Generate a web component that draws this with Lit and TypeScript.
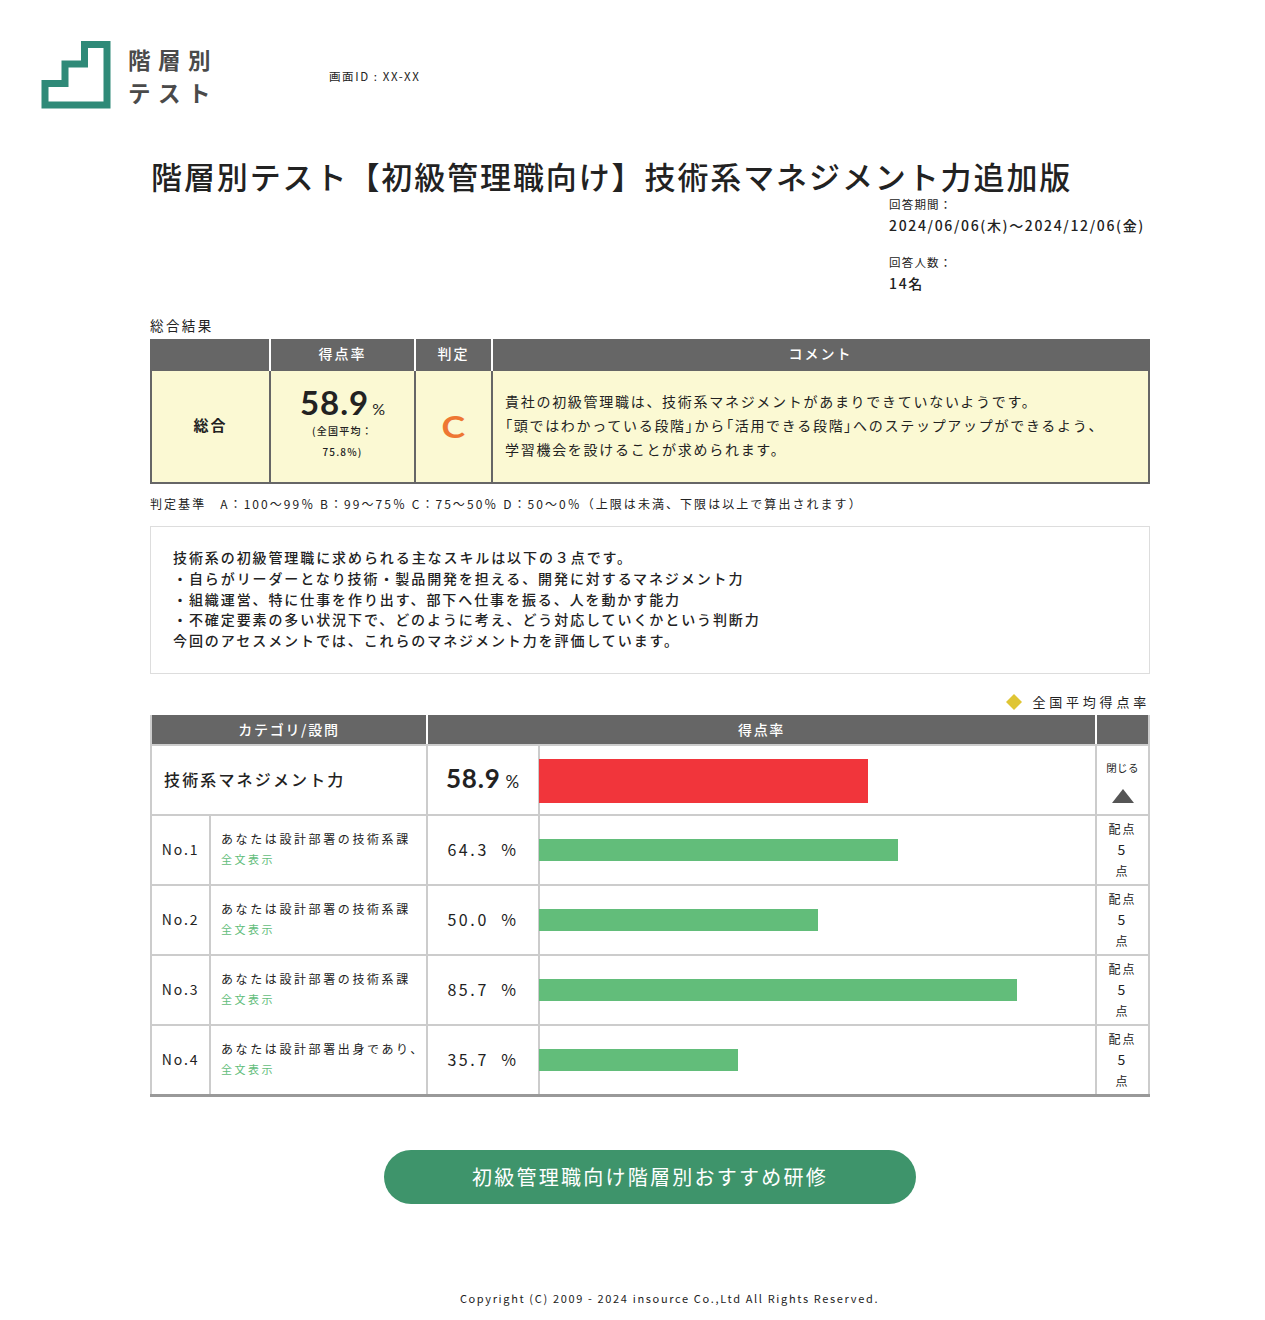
import { LitElement, html, css } from "lit";
import { customElement } from "lit/decorators.js";

const rows = [
  { no: "No.1", q: "あなたは設計部署の技術系課", rate: 64.3 },
  { no: "No.2", q: "あなたは設計部署の技術系課", rate: 50.0 },
  { no: "No.3", q: "あなたは設計部署の技術系課", rate: 85.7 },
  { no: "No.4", q: "あなたは設計部署出身であり、", rate: 35.7 },
];

@customElement("app-root")
export class AppRoot extends LitElement {
  static styles = css`
    :host {
      display: block;
      width: 1265px;
      height: 1320px;
      background: #fff;
      color: #222;
      font-family: "Noto Sans CJK JP", "Noto Sans", sans-serif;
      overflow: hidden;
    }
    * { box-sizing: border-box; }
    .top { display: flex; padding: 41px 0 0 41px; height: 157px; }
    .logo { width: 70px; height: 68px; display: block; flex: none; }
    .brand { margin-left: 17px; width: 201px; height: 70px; font-size: 22.5px; font-weight: 700; letter-spacing: 7.5px; color: #4a4a4a; display: flex; flex-direction: column; gap: 0; margin-top: 2px; }
    .brand div { height: 33px; line-height: 33px; }
    .sid { font-size: 11.5px; line-height: 16px; margin-top: 27px; letter-spacing: 1.6px; color: #222; }
    .main { margin-left: 150px; width: 1000px; }
    h1 { margin: 0 0 0 1px; font-size: 31px; line-height: 38px; font-weight: 500; letter-spacing: 1.9px; white-space: nowrap; color: #222; }
    .meta { margin: -1px 0 0 739px; height: 123px; }
    .meta .k { font-size: 11.5px; line-height: 16px; letter-spacing: 1.2px; height: 21px; padding-top: 2px; }
    .meta .v { font-size: 14px; line-height: 20px; letter-spacing: 1.65px; height: 37px; white-space: nowrap; font-weight: 500; }
    .cap { font-size: 13.5px; line-height: 20px; letter-spacing: 2.4px; height: 24px; margin-top: -2px; }
    .sum { display: grid; grid-template-columns: 117px 143px 75px 655px; column-gap: 2px; background: #666; padding: 0 2px 2px; }
    .sum .h { height: 32px; background: #666; color: #fff; font-size: 14px; font-weight: 500; letter-spacing: 2px; display: flex; align-items: center; justify-content: center; box-shadow: 2px 0 0 #fff; padding-bottom: 4px; }
    .sum .h.last { box-shadow: 2px 0 0 #666; }
    .sum .b { height: 111px; background: #fbf9d3; display: flex; align-items: center; justify-content: center; }
    .sum .total { font-size: 15px; font-weight: 700; letter-spacing: 2px; padding-bottom: 4px; }
    .sum .scorebox { flex-direction: column; justify-content: flex-start; text-align: center; padding-top: 12px; }
    .big { font-family: "Lato", sans-serif; font-size: 33px; line-height: 38px; height: 38px; font-weight: 700; letter-spacing: 1px; }
    .big small { font-size: 16px; font-weight: 400; letter-spacing: 0; margin-left: 3px; }
    .avg { font-size: 10px; line-height: 21px; font-weight: 500; letter-spacing: 1.2px; width: 90px; margin-top: -1px; }
    .sum .gradebox { padding-bottom: 2px; }
    .grade { font-size: 31px; line-height: 36px; font-weight: 700; color: #ee7733; font-family: "Lato", sans-serif; transform: scaleX(1.15); }
    .sum .comment { display: block; padding: 18px 0 0 12px; font-size: 14px; line-height: 24px; letter-spacing: 1.71px; }
    .br { font-feature-settings: "palt"; }
    .crit { font-size: 12px; line-height: 18px; letter-spacing: 2.05px; margin-top: 11px; white-space: nowrap; }
    .note { margin-top: 13px; height: 148px; border: 1px solid #ddd; padding: 20px 22px; font-size: 14px; line-height: 20.8px; letter-spacing: 1.91px; font-weight: 500; white-space: pre-line; }
    .legend { display: flex; justify-content: flex-end; align-items: center; height: 41px; padding-top: 14px; font-size: 13px; letter-spacing: 3.8px; }
    .legend svg { width: 18px; height: 18px; margin-right: 9px; }
    .tbl { display: grid; grid-template-columns: 57px 215px 110px 555px 51px; gap: 2px; background: #ccc; padding: 0 2px; border-bottom: 3px solid #999; }
    .tbl > div { background: #fff; display: flex; align-items: center; justify-content: center; }
    .tbl .th { background: #666; height: 29px; color: #fff; font-size: 14px; font-weight: 500; letter-spacing: 1.7px; box-shadow: 2px 0 0 #fff; padding-bottom: 2px; }
    .tbl .th.last { box-shadow: none; }
    .s2 { grid-column: span 2; }
    .tbl .cat { height: 68px; justify-content: flex-start; padding: 0 0 3px 12px; font-size: 16px; font-weight: 500; letter-spacing: 2.15px; }
    .tbl .rbig { font-family: "Lato", sans-serif; font-size: 26px; font-weight: 700; letter-spacing: .8px; padding: 0 0 4px 0; }
    .rbig small { font-size: 17px; font-weight: 400; margin-left: 5px; }
    .tbl .barcell { justify-content: flex-start; padding-top: 2px; }
    .track { display: block; width: 558px; margin-left: -1px; flex: none; }
    .bar { display: block; }
    .red { height: 44px; background: #f1353b; }
    .green { height: 22px; background: #62bd7a; margin-top: -2px; }
    .tbl .close { flex-direction: column; font-size: 10.5px; line-height: 14px; padding-top: 4px; letter-spacing: .3px; }
    .close svg { width: 24px; height: 16px; margin-top: 13px; display: block; }
    .tbl .no { height: 68px; font-size: 14px; letter-spacing: 1.9px; padding-bottom: 2px; }
    .tbl .q { flex-direction: column; align-items: flex-start; justify-content: center; padding: 0 0 2px 10px; font-size: 12px; letter-spacing: 2.6px; line-height: 21px; white-space: nowrap; overflow: hidden; }
    .q a { color: #62bd7a; font-size: 11px; letter-spacing: 2.5px; text-decoration: none; }
    .pct { font-size: 16px; letter-spacing: 2.6px; white-space: pre; padding-bottom: 2px; }
    .tbl .pts { flex-direction: column; font-size: 12px; line-height: 21px; letter-spacing: 2px; padding-bottom: 2px; }
    .pts b { font-weight: 400; font-size: 14px; }
    .btn { display: flex; align-items: center; justify-content: center; width: 532px; height: 54px; margin: 53px 0 0 234px; padding-bottom: 2px; border-radius: 27px; background: #3e946b; color: #fff; font-size: 20px; letter-spacing: 2.25px; text-decoration: none; }
    .foot { margin-top: 84px; margin-left: 39px; text-align: center; font-size: 11px; line-height: 20px; letter-spacing: 1.65px; white-space: nowrap; }
  `;

  render() {
    return html`
      <div class="top">
        <svg class="logo" viewBox="41 41 70 68" aria-hidden="true">
          <path d="M45 83.5H65V64H84.5V44.5H107V105H45Z" fill="none" stroke="#2f8a78" stroke-width="7" stroke-linejoin="miter" />
        </svg>
        <div class="brand"><div>階層別</div><div>テスト</div></div>
        <div class="sid">画面ID : XX-XX</div>
      </div>
      <div class="main">
        <h1>階層別テスト【初級管理職向け】技術系マネジメント力追加版</h1>
        <div class="meta">
          <div class="k">回答期間：</div>
          <div class="v">2024/06/06(木)～2024/12/06(金)</div>
          <div class="k">回答人数：</div>
          <div class="v">14名</div>
        </div>
        <div class="cap">総合結果</div>
        <div class="sum">
          <div class="h"></div>
          <div class="h">得点率</div>
          <div class="h">判定</div>
          <div class="h last">コメント</div>
          <div class="b total">総合</div>
          <div class="b scorebox">
            <div class="big">58.9<small>%</small></div>
            <div class="avg">(全国平均：75.8%)</div>
          </div>
          <div class="b gradebox"><span class="grade">C</span></div>
          <div class="b comment">貴社の初級管理職は、技術系マネジメントがあまりできていないようです。<br /><span class="br">「</span>頭ではわかっている段階<span class="br">」</span>から<span class="br">「</span>活用できる段階<span class="br">」</span>へのステップアップができるよう、<br />学習機会を設けることが求められます。</div>
        </div>
        <div class="crit">判定基準　A：100～99％ B：99～75％ C：75～50％ D：50～0％（上限は未満、下限は以上で算出されます）</div>
        <div class="note">技術系の初級管理職に求められる主なスキルは以下の３点です。
・自らがリーダーとなり技術・製品開発を担える、開発に対するマネジメント力
・組織運営、特に仕事を作り出す、部下へ仕事を振る、人を動かす能力
・不確定要素の多い状況下で、どのように考え、どう対応していくかという判断力
今回のアセスメントでは、これらのマネジメント力を評価しています。</div>
        <div class="legend">
          <svg viewBox="0 0 18 18" aria-hidden="true"><path d="M9 1L17 9L9 17L1 9Z" fill="#dfc534" /></svg>
          全国平均得点率
        </div>
        <div class="tbl">
          <div class="th s2">カテゴリ/設問</div>
          <div class="th s2">得点率</div>
          <div class="th last"></div>
          <div class="s2 cat">技術系マネジメント力</div>
          <div class="rbig"><span>58.9<small>%</small></span></div>
          <div class="barcell"><span class="track"><span class="bar red" style="width: 58.9%"></span></span></div>
          <div class="close">閉じる
            <svg viewBox="0 0 24 16" aria-hidden="true"><path d="M12 1L23 15H1Z" fill="#555" /></svg>
          </div>
          ${rows.map(
            (r) => html`
              <div class="no">${r.no}</div>
              <div class="q"><span>${r.q}</span><a href="#">全文表示</a></div>
              <div class="pct">${r.rate.toFixed(1)}  %</div>
              <div class="barcell"><span class="track"><span class="bar green" style="width: ${r.rate}%"></span></span></div>
              <div class="pts"><span>配点</span><b>5</b><span>点</span></div>
            `
          )}
        </div>
        <a class="btn" href="#">初級管理職向け階層別おすすめ研修</a>
        <div class="foot">Copyright (C) 2009 - 2024 insource Co.,Ltd All Rights Reserved.</div>
      </div>
    `;
  }
}
